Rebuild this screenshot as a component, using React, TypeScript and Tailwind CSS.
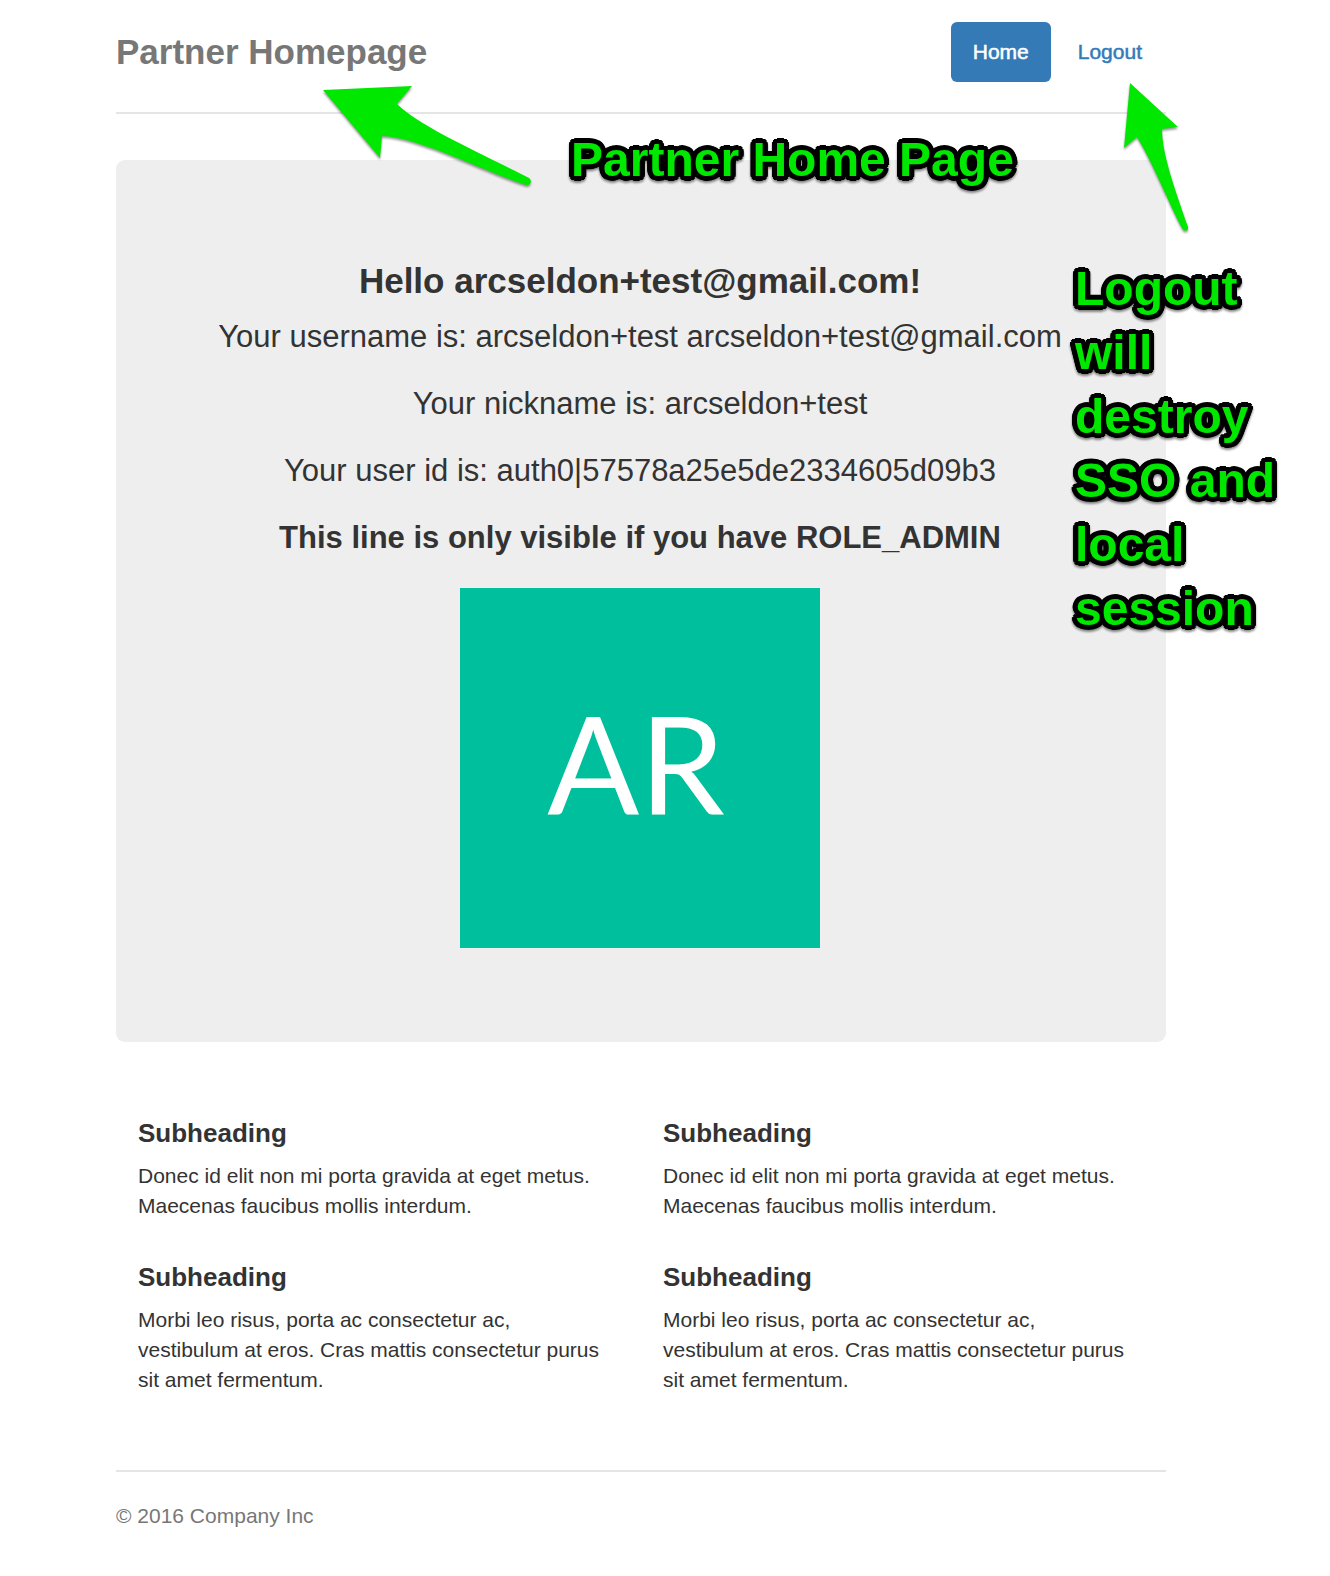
const shortText =
  "Donec id elit non mi porta gravida at eget metus. Maecenas faucibus mollis interdum.";
const longText =
  "Morbi leo risus, porta ac consectetur ac, vestibulum at eros. Cras mattis consectetur purus sit amet fermentum.";

function Header() {
  return (
    <header className="mb-[46px] flex items-center justify-between border-b-2 border-[#e5e5e5] pt-[22px] pb-[30px]">
      <h3 className="text-[35px] leading-[60px] font-bold text-[#777777]">Partner Homepage</h3>
      <nav aria-label="Main">
        <ul className="flex gap-[3px] text-[21px] leading-[30px]">
          <li>
            <a
              href="#home"
              aria-current="page"
              className="block rounded-md bg-[#337ab7] px-[22px] py-[15px] text-white [-webkit-text-stroke:0.5px_white]"
            >
              Home
            </a>
          </li>
          <li>
            <a
              href="#logout"
              className="block rounded-md px-6 py-[15px] text-[#337ab7] [-webkit-text-stroke:0.5px_#337ab7]"
            >
              Logout
            </a>
          </li>
        </ul>
      </nav>
    </header>
  );
}

function Avatar() {
  return (
    <div
      role="img"
      aria-label="AR"
      className="flex size-[360px] items-center justify-center bg-[#00bf9c] pr-2 pb-2.5 font-[Lato,sans-serif] text-[136px] leading-none text-white"
    >
      AR
    </div>
  );
}

function Welcome() {
  return (
    <main className="flex flex-col items-center rounded-[9px] bg-[#eeeeee] pt-[101px] pr-[2px] pb-[94px] text-center text-[31px] leading-[44px]">
      <h3 className="mb-[14px] text-[35px] leading-[40px] font-bold">Hello arcseldon+test@gmail.com!</h3>
      <div className="mb-[28px] flex flex-col gap-[23px]">
        <p>Your username is: arcseldon+test arcseldon+test@gmail.com</p>
        <p>Your nickname is: arcseldon+test</p>
        <p>Your user id is: auth0|57578a25e5de2334605d09b3</p>
        <p className="font-bold">This line is only visible if you have ROLE_ADMIN</p>
      </div>
      <Avatar />
    </main>
  );
}

function Blurb({ text }: { text: string }) {
  return (
    <section>
      <h4 className="mb-[13px] text-[26px] leading-[30px] font-bold">Subheading</h4>
      <p className="text-[21px] leading-[30px]">{text}</p>
    </section>
  );
}

function Marketing() {
  return (
    <div className="grid grid-cols-2 gap-x-[53px] gap-y-[41px] pt-[76px] pr-[31px] pb-[75px] pl-[22px]">
      <Blurb text={shortText} />
      <Blurb text={shortText} />
      <Blurb text={longText} />
      <Blurb text={longText} />
    </div>
  );
}

const note =
  "absolute text-[48px] leading-[64px] font-bold text-[#00e800] [text-shadow:5px_0_#000,-5px_0_#000,0_5px_#000,0_-5px_#000,4px_3px_#000,-4px_3px_#000,4px_-3px_#000,-4px_-3px_#000,3px_4px_#000,-3px_4px_#000,3px_-4px_#000,-3px_-4px_#000,5px_1px_#000,-5px_1px_#000,5px_-1px_#000,-5px_-1px_#000,2px_2px_#000,-2px_2px_#000,2px_-2px_#000,-2px_-2px_#000] drop-shadow-[0_2px_1px_rgba(0,0,0,0.45)]";

function Annotations() {
  return (
    <>
      <svg
        aria-hidden="true"
        className="pointer-events-none absolute top-[80px] left-[316px] h-[116px] w-[224px] drop-shadow-[0_2px_1px_rgba(0,0,0,0.4)]"
        viewBox="316 80 224 116"
        fill="#00e800"
      >
        <path d="M323 90L412 86L397 104C420 126 466 146 529 178C533 181 530 186 526 185C476 168 420 138 382 136L380 158Z" />
      </svg>
      <svg
        aria-hidden="true"
        className="pointer-events-none absolute top-[76px] left-[1116px] h-[164px] w-[80px] drop-shadow-[0_2px_1px_rgba(0,0,0,0.4)]"
        viewBox="1116 76 80 164"
        fill="#00e800"
      >
        <path d="M1130 83L1178 127L1162 129C1162 154 1175 189 1188 227C1189 231 1184 232 1182 228C1169 204 1155 167 1137 137L1124 148Z" />
      </svg>
      <p className={`${note} top-[128px] left-[571px] whitespace-nowrap`}>Partner Home Page</p>
      <p className={`${note} top-[257px] left-[1075px] w-[220px]`}>
        Logout will destroy SSO and local session
      </p>
    </>
  );
}

export default function App() {
  return (
    <div className="relative min-h-screen bg-white pr-[164px] pb-[45px] pl-[116px] font-['Liberation_Sans',Arial,sans-serif] text-[#333333]">
      <Header />
      <Welcome />
      <Marketing />
      <footer className="border-t-2 border-[#e5e5e5] pt-[29px] text-[21px] leading-[30px] text-[#777777]">
        <p>© 2016 Company Inc</p>
      </footer>
      <Annotations />
    </div>
  );
}
